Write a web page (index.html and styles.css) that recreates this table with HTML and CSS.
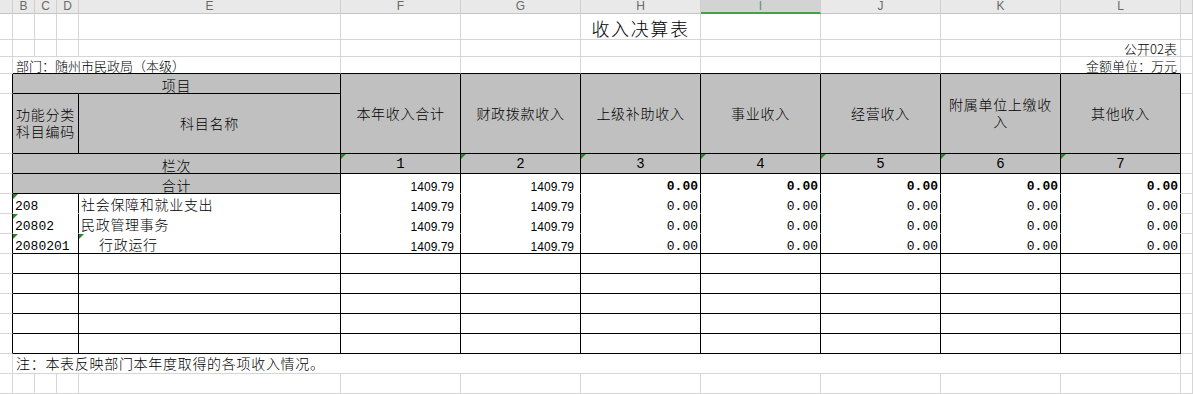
FILE: index.html
```html
<!DOCTYPE html>
<html lang="zh">
<head>
<meta charset="utf-8">
<title>收入决算表</title>
<link rel="stylesheet" href="styles.css">
</head>
<body>
<div class="sheet">
  <!-- column header -->
  <div class="h"></div><div class="h">B</div><div class="h">C</div><div class="h">D</div><div class="h">E</div><div class="h">F</div><div class="h">G</div><div class="h">H</div><div class="h hi">I</div><div class="h">J</div><div class="h">K</div><div class="h">L</div><div class="h"></div>

  <!-- row 1: title -->
  <div class="c"></div><div class="c"></div><div class="c"></div><div class="c"></div><div class="c"></div><div class="c"></div><div class="c"></div><div class="c title">收入决算表</div><div class="c"></div><div class="c"></div><div class="c"></div><div class="c"></div><div class="c"></div>

  <!-- row 2 -->
  <div class="c"></div><div class="c"></div><div class="c"></div><div class="c"></div><div class="c"></div><div class="c"></div><div class="c"></div><div class="c"></div><div class="c"></div><div class="c"></div><div class="c"></div><div class="c small right">公开02表</div><div class="c"></div>

  <!-- row 3 -->
  <div class="c"></div><div class="c s4 bt small">部门：随州市民政局（本级）</div><div class="c bt"></div><div class="c bt"></div><div class="c bt"></div><div class="c bt"></div><div class="c bt"></div><div class="c bt"></div><div class="c bt small right">金额单位：万元</div><div class="c"></div>

  <!-- row 4/5: table header -->
  <div class="c br"></div><div class="c s4 t g ctr lo">项目</div>
  <div class="c r2 t g ctr">本年收入合计</div><div class="c r2 t g ctr">财政拨款收入</div><div class="c r2 t g ctr">上级补助收入</div><div class="c r2 t g ctr">事业收入</div><div class="c r2 t g ctr">经营收入</div><div class="c r2 t g ctr wrap">附属单位上缴收入</div><div class="c r2 t g ctr">其他收入</div>
  <div class="c"></div>
  <div class="c br"></div><div class="c s3 t g ctr wrap">功能分类科目编码</div><div class="c t g ctr">科目名称</div><div class="c"></div>

  <!-- row 6: 栏次 -->
  <div class="c br"></div><div class="c s4 t g ctr lo">栏次</div>
  <div class="c t g ctr idx tri">1</div><div class="c t g ctr idx tri">2</div><div class="c t g ctr idx tri">3</div><div class="c t g ctr idx tri">4</div><div class="c t g ctr idx tri">5</div><div class="c t g ctr idx tri">6</div><div class="c t g ctr idx tri">7</div>
  <div class="c"></div>

  <!-- row 7: 合计 -->
  <div class="c br"></div><div class="c s4 t g ctr lo">合计</div>
  <div class="c t nb num">1409.79</div><div class="c t nb num">1409.79</div><div class="c t nb mono b">0.00</div><div class="c t nb mono b">0.00</div><div class="c t nb mono b">0.00</div><div class="c t nb mono b">0.00</div><div class="c t nb mono b">0.00</div>
  <div class="c"></div>

  <!-- row 8 -->
  <div class="c br"></div><div class="c s3 t nb code tri">208</div><div class="c t nb name">社会保障和就业支出</div>
  <div class="c t nb num">1409.79</div><div class="c t nb num">1409.79</div><div class="c t nb mono">0.00</div><div class="c t nb mono">0.00</div><div class="c t nb mono">0.00</div><div class="c t nb mono">0.00</div><div class="c t nb mono">0.00</div>
  <div class="c"></div>

  <!-- row 9 -->
  <div class="c br"></div><div class="c s3 t nb code tri">20802</div><div class="c t nb name">民政管理事务</div>
  <div class="c t nb num">1409.79</div><div class="c t nb num">1409.79</div><div class="c t nb mono">0.00</div><div class="c t nb mono">0.00</div><div class="c t nb mono">0.00</div><div class="c t nb mono">0.00</div><div class="c t nb mono">0.00</div>
  <div class="c"></div>

  <!-- row 10 -->
  <div class="c br"></div><div class="c s3 t code tri">2080201</div><div class="c t name indent tri">行政运行</div>
  <div class="c t num">1409.79</div><div class="c t num">1409.79</div><div class="c t mono">0.00</div><div class="c t mono">0.00</div><div class="c t mono">0.00</div><div class="c t mono">0.00</div><div class="c t mono">0.00</div>
  <div class="c"></div>

  <!-- rows 11-15: empty table rows -->
  <div class="c br"></div><div class="c s3 t"></div><div class="c t"></div><div class="c t"></div><div class="c t"></div><div class="c t"></div><div class="c t"></div><div class="c t"></div><div class="c t"></div><div class="c t"></div><div class="c"></div>
  <div class="c br"></div><div class="c s3 t"></div><div class="c t"></div><div class="c t"></div><div class="c t"></div><div class="c t"></div><div class="c t"></div><div class="c t"></div><div class="c t"></div><div class="c t"></div><div class="c"></div>
  <div class="c br"></div><div class="c s3 t"></div><div class="c t"></div><div class="c t"></div><div class="c t"></div><div class="c t"></div><div class="c t"></div><div class="c t"></div><div class="c t"></div><div class="c t"></div><div class="c"></div>
  <div class="c br"></div><div class="c s3 t"></div><div class="c t"></div><div class="c t"></div><div class="c t"></div><div class="c t"></div><div class="c t"></div><div class="c t"></div><div class="c t"></div><div class="c t"></div><div class="c"></div>
  <div class="c br"></div><div class="c s3 t"></div><div class="c t"></div><div class="c t"></div><div class="c t"></div><div class="c t"></div><div class="c t"></div><div class="c t"></div><div class="c t"></div><div class="c t"></div><div class="c"></div>

  <!-- row 16: note -->
  <div class="c"></div><div class="c s11 note">注：本表反映部门本年度取得的各项收入情况。</div><div class="c"></div>

  <!-- row 17 -->
  <div class="c"></div><div class="c"></div><div class="c"></div><div class="c"></div><div class="c"></div><div class="c"></div><div class="c"></div><div class="c"></div><div class="c"></div><div class="c"></div><div class="c"></div><div class="c"></div><div class="c"></div>
</div>
</body>
</html>
```

FILE: styles.css
```css
html, body {
  margin: 0;
  padding: 0;
  background: #ffffff;
  overflow: hidden;
}

.sheet {
  display: grid;
  grid-template-columns: 13px 22px 22px 22px 262px repeat(7, 120px) 1fr;
  grid-template-rows: 14px 26px 17px 17px 20px 60px repeat(12, 20px) 19px 1fr;
  width: 1193px;
  height: 394px;
  font-family: "Noto Sans CJK SC", "Liberation Sans", sans-serif;
  font-weight: 300;
  color: #000;
}

/* column header cells */
.h {
  box-sizing: border-box;
  background: #e9e9e9;
  border-right: 1px solid #cfcfcf;
  border-bottom: 1px solid #c4c4c4;
  font-family: "Liberation Sans", Arial, sans-serif;
  font-weight: normal;
  font-size: 12px;
  line-height: 13px;
  color: #6a6a6a;
  text-align: center;
}

.hi {
  background: #d3d3d3;
  border-bottom: 2px solid #3fa34a;
  color: #4f9a6a;
}

/* sheet cells */
.c {
  position: relative;
  box-sizing: border-box;
  min-width: 0;
  border-right: 1px solid #d6d6d6;
  border-bottom: 1px solid #d6d6d6;
  display: flex;
  align-items: flex-end;
  padding: 0 2px 1px 2px;
  font-size: 14px;
  line-height: 16px;
  letter-spacing: 0.7px;
  white-space: nowrap;
}

.s3 { grid-column: span 3; }
.s4 { grid-column: span 4; }
.s11 { grid-column: span 11; }
.r2 { grid-row: span 2; }

/* black table borders */
.t {
  border-right-color: #000;
  border-bottom-color: #000;
}
.br { border-right-color: #000; }
.bt { border-bottom-color: #000; }
.nb { border-bottom-color: #ffffff; }

.g { background: #c0c0c0; }

.ctr {
  justify-content: center;
  align-items: center;
  text-align: center;
}

.lo { padding-top: 3px; }

.wrap {
  white-space: normal;
  line-height: 17px;
}

.title {
  justify-content: center;
  font-size: 18px;
  line-height: 20px;
  letter-spacing: 1.6px;
  padding-bottom: 1px;
}

.small {
  font-size: 13px;
  line-height: 15px;
  letter-spacing: 0;
  padding-bottom: 0;
}

.s4.small { padding-left: 3px; }

.right {
  justify-content: flex-end;
  padding-right: 3px;
}

.idx {
  font-family: "Liberation Mono", monospace;
  font-weight: normal;
  font-size: 14px;
  letter-spacing: 0;
  padding-top: 2px;
}

.num {
  justify-content: flex-end;
  font-family: "Liberation Sans", Arial, sans-serif;
  font-weight: normal;
  font-size: 12px;
  line-height: 12px;
  letter-spacing: 0;
  padding-right: 6px;
  padding-bottom: 0;
}

.mono {
  justify-content: flex-end;
  font-family: "Liberation Mono", monospace;
  font-weight: normal;
  font-size: 13px;
  line-height: 12px;
  letter-spacing: 0;
  padding-right: 2px;
  padding-bottom: 0;
}

.mono.b { font-weight: bold; }

.code {
  font-family: "Liberation Mono", monospace;
  font-weight: normal;
  font-size: 13px;
  line-height: 12px;
  letter-spacing: 0;
  padding-left: 2px;
  padding-bottom: 0;
}

.name { padding-left: 2px; }
.indent { padding-left: 20px; }

.note {
  padding-left: 3px;
  padding-bottom: 2px;
  border-right-color: #d6d6d6;
}

/* green "number stored as text" marker */
.tri::before {
  content: "";
  position: absolute;
  top: 0;
  left: 0;
  width: 0;
  height: 0;
  border-top: 5px solid #1f8f1f;
  border-right: 5px solid transparent;
}
```
